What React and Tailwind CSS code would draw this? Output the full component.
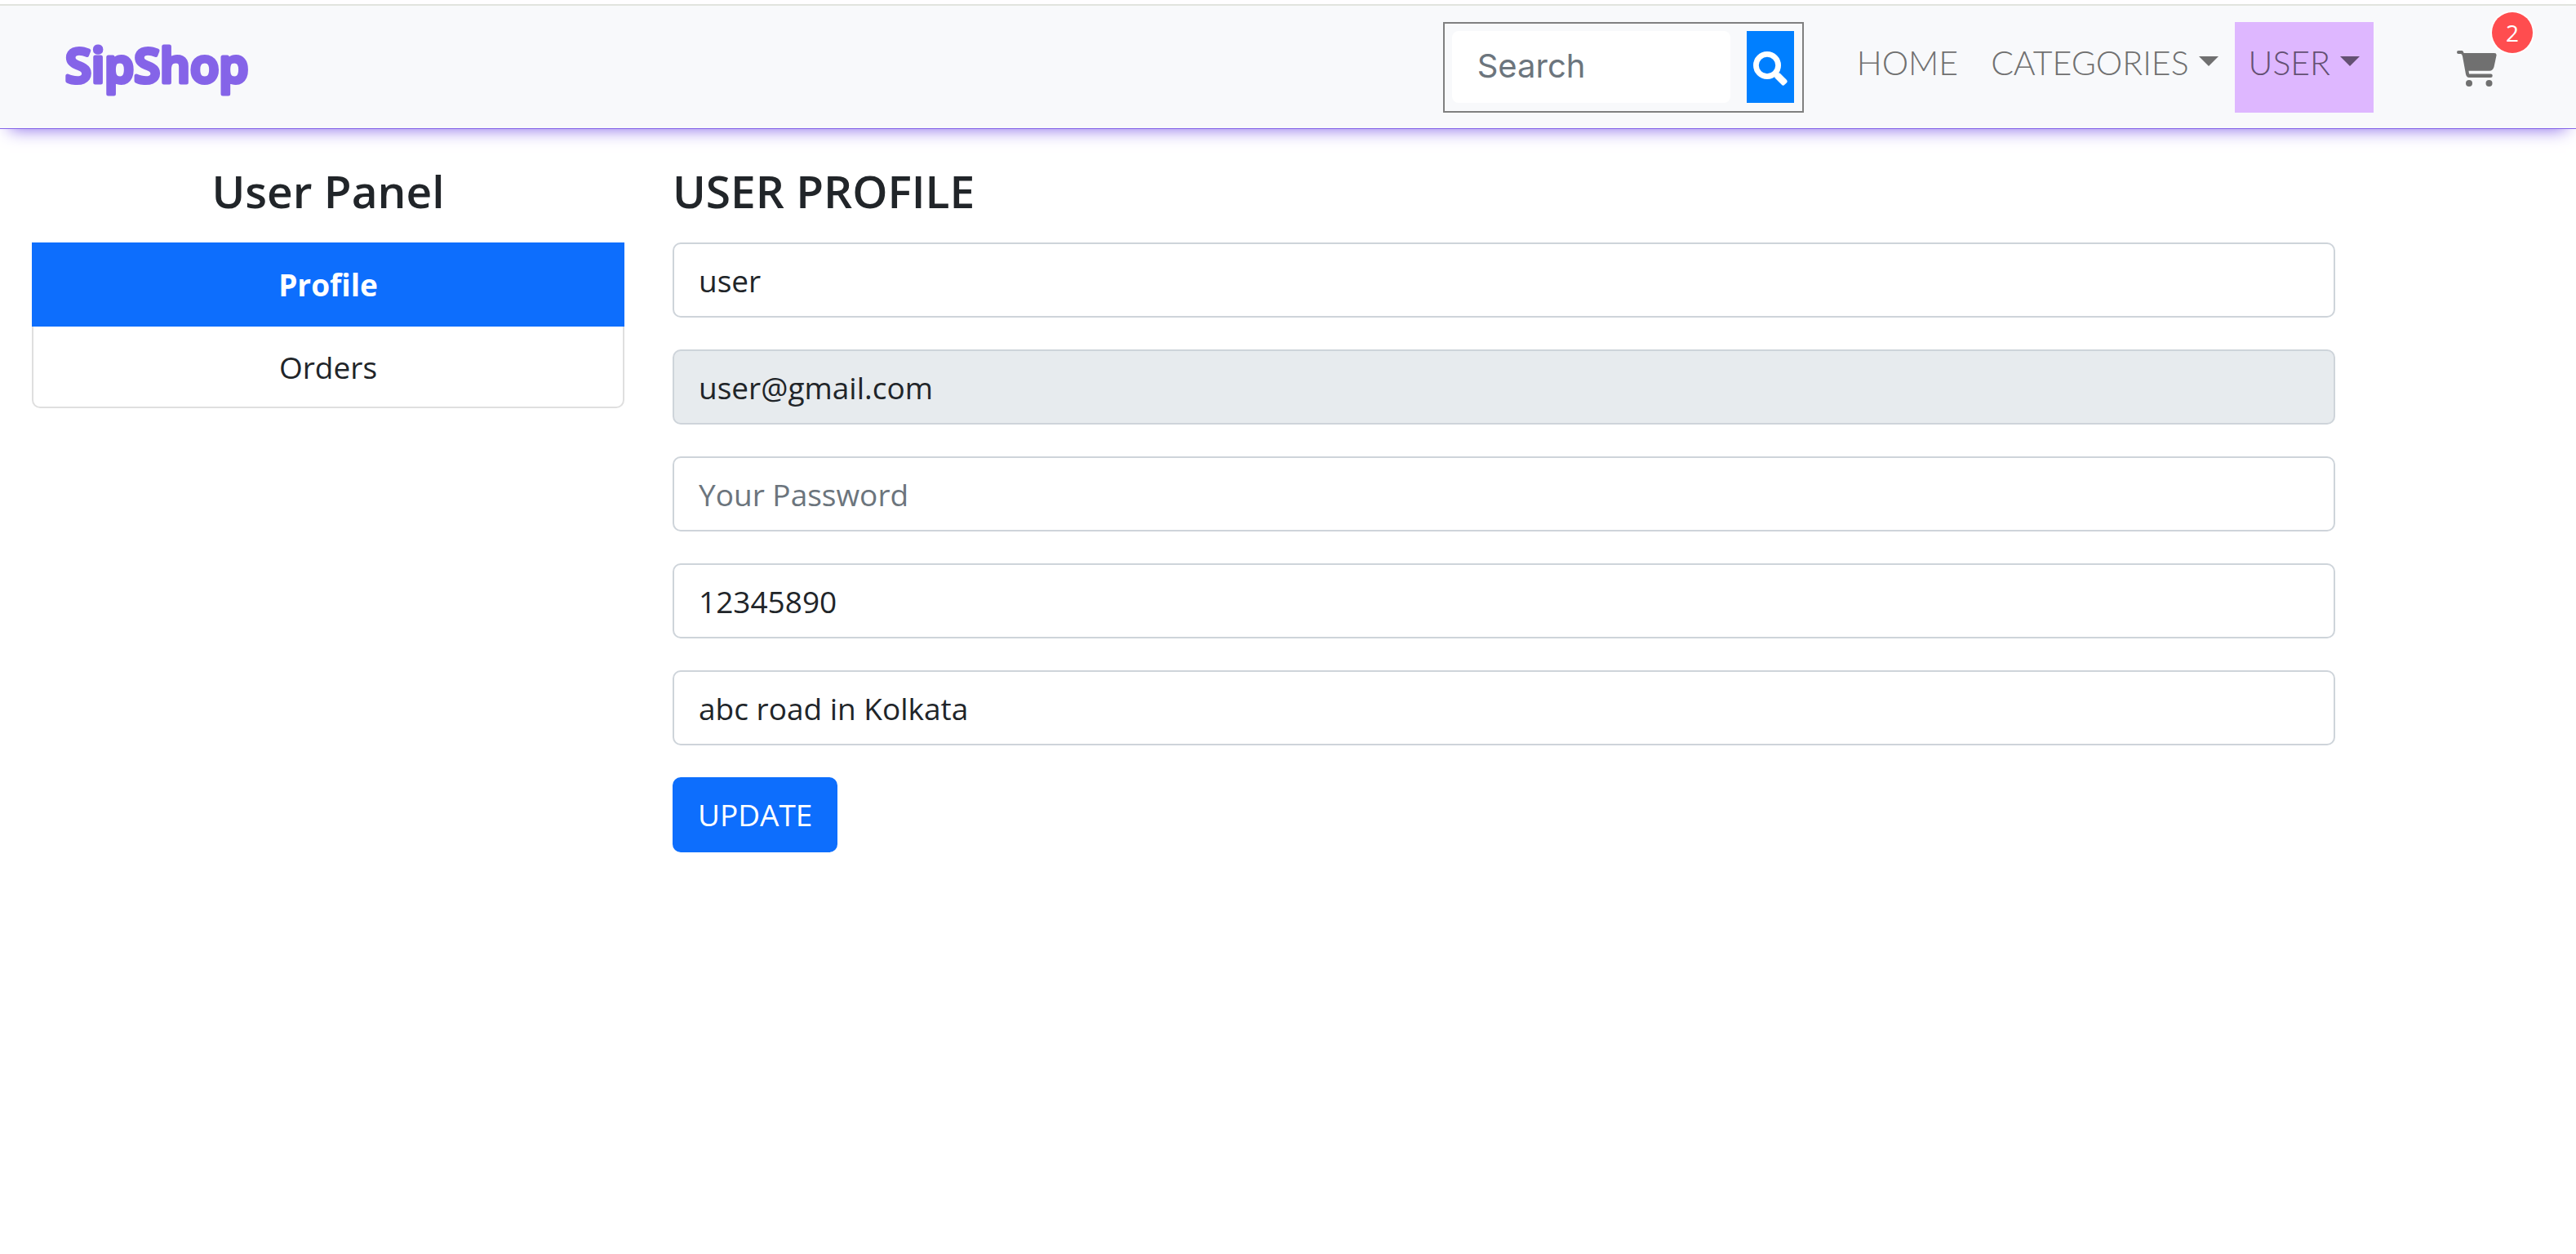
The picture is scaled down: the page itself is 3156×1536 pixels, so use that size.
import React from "react";

const segoe = "font-['Open_Sans','Noto_Sans',sans-serif]";
const field =
  "block w-full h-[92px] rounded-[10px] border-2 border-[#ced4da] bg-white px-[30px] text-[37px] text-[#212529] placeholder:text-[#6c757d] placeholder:opacity-100 disabled:bg-[#e7ebee] disabled:opacity-100";

function Caret() {
  return <span aria-hidden="true" className="mb-1 size-0 border-x-12 border-t-12 border-x-transparent border-t-current" />;
}

function Logo() {
  return (
    <svg viewBox="0 0 232 80" className="h-20 w-[232px] overflow-visible" role="img" aria-label="SipShop">
      <text
        x="1"
        y="58"
        fill="#8564e8"
        stroke="#8564e8"
        strokeWidth="5"
        strokeLinejoin="round"
        className="font-['Open_Sans',sans-serif] text-[58px] font-semibold"
      >
        SipShop
      </text>
    </svg>
  );
}

function SearchForm() {
  return (
    <form className="flex h-[111px] w-[442px] items-start gap-5 border-2 border-[#808080] p-[9px] pr-[10px]" onSubmit={(e) => e.preventDefault()}>
      <input
        type="search"
        aria-label="Search"
        placeholder="Search"
        className="h-[88px] min-w-0 flex-1 rounded-lg bg-white px-[31px] pb-1 font-['Inter',sans-serif] text-[40px] text-[#212529] placeholder:text-[#6c757d] placeholder:opacity-100"
      />
      <button type="submit" aria-label="Submit search" className="grid h-[88px] w-[58px] place-items-center bg-[#007fff] text-white">
        <svg viewBox="0 0 42 42" className="mt-1 size-[42px]">
          <circle cx="17" cy="17" r="13.6" fill="none" stroke="currentColor" strokeWidth="6.8" />
          <rect x="40" y="-4.2" width="16" height="8.4" rx="2.5" fill="currentColor" transform="rotate(45)" />
        </svg>
      </button>
    </form>
  );
}

function Cart() {
  return (
    <a href="#cart" aria-label="Cart, 2 items" className="relative mt-[35px] block text-[#707070]">
      <svg viewBox="0 0 49 44" className="h-[44px] w-[49px]" fill="currentColor">
        <path d="M2 0H6.500Q8 .5 8.600 3H46Q49 3 48.500 6L45.500 20Q44.200 24.500 40 24.800H14.500L15 28.500H41.500A2.200 2.200 0 0 1 41.500 33H15Q12 33 11 29L7 7Q6.300 4 5 4H2A2 2 0 0 1 2 0Z" />
        <circle cx="15" cy="40" r="4" />
        <circle cx="39.500" cy="40" r="4" />
      </svg>
      <span className={`absolute -top-[47px] left-[43px] grid size-[50px] place-items-center rounded-full bg-[#ff4d4f] text-[28px] text-white ring-2 ring-white ${segoe}`}>2</span>
    </a>
  );
}

function Navbar() {
  return (
    <header className="mt-[5px] flex h-[153px] items-start justify-between border-t-2 border-b border-t-[#e1e4de] border-b-[#8564e8] bg-[#f8f9fb] pr-[97px] pl-[79px] shadow-[0_12px_20px_-12px_#8564e8]">
      <a href="#home" className="mt-9 block">
        <Logo />
      </a>
      <div className="flex items-start pt-5">
        <SearchForm />
        <nav className="ml-[53px] flex font-['Lato',sans-serif] text-[41px] leading-[49px] font-light text-[#707070]">
          <a href="#home" className="flex h-[111px] items-center pr-5 pb-3 pl-3">HOME</a>
          <button type="button" className="flex h-[111px] items-center gap-3 px-5 pb-3">
            CATEGORIES <Caret />
          </button>
          <button type="button" className="flex h-[111px] items-center gap-3 bg-[#deb7ff] px-[17px] pb-3 text-[#645073]">
            USER <Caret />
          </button>
        </nav>
        <div className="ml-[102px]">
          <Cart />
        </div>
      </div>
    </header>
  );
}

const fields = [
  { id: "name", label: "Name", type: "text", value: "user" },
  { id: "email", label: "Email", type: "email", value: "user@gmail.com", disabled: true },
  { id: "password", label: "Password", type: "password", value: "", placeholder: "Your Password" },
  { id: "phone", label: "Phone", type: "text", value: "12345890" },
  { id: "address", label: "Address", type: "text", value: "abc road in Kolkata" },
];

export default function App() {
  return (
    <div className={`text-[#212529] ${segoe}`}>
      <Navbar />
      <main className="grid grid-cols-[726fr_2037fr_197fr] gap-x-[59px] px-[39px] pt-9">
        <aside className="text-center">
          <h4 className="mb-6 text-[55px] leading-[79px] font-semibold">User Panel</h4>
          <nav className="text-[37px]">
            <a href="#profile" aria-current="page" className="block h-[103px] bg-[#0d6efd] leading-[103px] font-bold text-white">Profile</a>
            <a href="#orders" className="block h-[100px] rounded-b-[10px] border-2 border-t-0 border-[#dfdfdf] leading-[100px]">Orders</a>
          </nav>
        </aside>
        <section>
          <h4 className="mb-6 text-[55px] leading-[79px] font-semibold">USER PROFILE</h4>
          <form className="flex flex-col items-start gap-[39px]" onSubmit={(e) => e.preventDefault()}>
            {fields.map((f) => (
              <input
                key={f.id}
                id={f.id}
                aria-label={f.label}
                type={f.type}
                defaultValue={f.value}
                placeholder={f.placeholder}
                disabled={f.disabled}
                className={field}
              />
            ))}
            <button type="submit" className="h-[92px] rounded-[10px] bg-[#0d6efd] px-[31px] text-[37px] text-white">UPDATE</button>
          </form>
        </section>
      </main>
    </div>
  );
}
